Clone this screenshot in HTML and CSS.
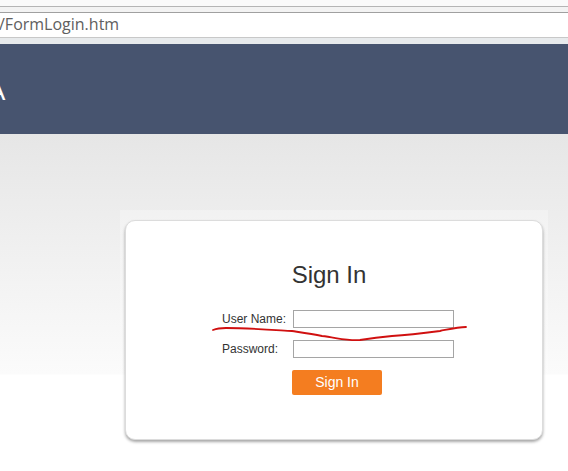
FILE: index.html
```html
<!DOCTYPE html>
<html>
<head>
<meta charset="utf-8">
<title>FormLogin</title>
<link rel="stylesheet" href="styles.css">
</head>
<body>
<div class="chrome">
  <div class="chrome-top"></div>
  <div class="address">/FormLogin.htm</div>
  <div class="chrome-bottom"></div>
</div>
<div class="header"><span class="brand">A</span></div>
<div class="main">
  <div class="backdrop">
    <div class="card">
      <h1 class="title">Sign In</h1>
      <form class="form">
        <label class="label" for="u">User Name:</label>
        <input class="field" id="u" type="text">
        <label class="label" for="p">Password:</label>
        <input class="field" id="p" type="password">
        <button class="btn" type="button">Sign In</button>
      </form>
    </div>
  </div>
</div>
<svg class="scribble" width="568" height="471" viewBox="0 0 568 471">
  <path d="M213 330 C 218 328, 222 328, 226 328 C 250 328, 275 330, 292 331 C 305 333, 312 334, 322 336 C 338 338, 348 341, 360 340 C 372 338, 380 337, 392 336 C 410 335, 425 333, 440 331 C 450 329, 458 327, 466 327" fill="none" stroke="#d01010" stroke-width="1.8" stroke-linecap="round"/>
</svg>
</body>
</html>
```

FILE: styles.css
```css
html, body {
  margin: 0;
  padding: 0;
  background: #fff;
  overflow: hidden;
}
body {
  width: 568px;
  height: 471px;
  position: relative;
  font-family: "Liberation Sans", Arial, sans-serif;
}
.chrome {
  height: 44px;
  background: #fff;
}
.chrome-top {
  height: 6px;
  background: #fafafa;
  border-bottom: 1px solid #b5b5b5;
}
.address {
  height: 30px;
  box-sizing: border-box;
  border-top: 5px solid #f3f3f3;
  font-family: "Open Sans", "Liberation Sans", sans-serif;
  font-size: 16px;
  line-height: 24px;
  color: #606060;
  margin-left: -1px;
  background: #fff;
  box-shadow: inset 0 1px 0 #a0a0a0;
}
.chrome-bottom {
  height: 7px;
  border-top: 1px solid #c8c8c8;
  background: #e7eaec;
}
.header {
  height: 90px;
  background: #47546f;
  display: flex;
  align-items: center;
}
.brand {
  color: #fff;
  font-size: 26px;
  margin-left: -12px;
  margin-top: 4px;
}
.main {
  height: 337px;
  background: linear-gradient(#e6e6e6 0px, #fbfbfb 240px, #fff 241px);
  padding-top: 76px;
  box-sizing: border-box;
}
.backdrop {
  margin-left: 120px;
  width: 428px;
  padding: 10px 5px 6px;
  box-sizing: border-box;
  background: linear-gradient(rgba(255,255,255,0.3), rgba(255,255,255,0.1));
}
.card {
  background: #fff;
  border: 1px solid #dcdcdc;
  border-radius: 10px;
  box-shadow: 0 2px 3px rgba(0,0,0,0.35);
  padding: 40px 0 44px;
  height: 220px;
  box-sizing: border-box;
}
.title {
  margin: 0 0 21px 0;
  text-align: center;
  font-size: 24px;
  line-height: 28px;
  font-weight: normal;
  color: #333;
  padding-right: 10px;
}
.form {
  margin: 0 0 0 96px;
  width: 232px;
  display: grid;
  grid-template-columns: 71px 161px;
  grid-auto-rows: 18px;
  row-gap: 12px;
  align-items: center;
}
.label {
  font-size: 12px;
  color: #333;
  line-height: 14px;
}
.field {
  height: 18px;
  width: 161px;
  box-sizing: border-box;
  border: 1px solid #a5a5a5;
  margin: 0;
  padding: 0 3px;
  background: #fff;
}
.btn {
  grid-column: 2;
  margin: 0 0 0 -1px;
  width: 90px;
  height: 25px;
  align-self: start;
  background: #f47d20;
  border: none;
  border-radius: 2px;
  color: #fff;
  font-family: "Liberation Sans", Arial, sans-serif;
  font-size: 14px;
  line-height: 23px;
  padding: 0;
}
.scribble {
  position: absolute;
  left: 0;
  top: 0;
  pointer-events: none;
}
```
